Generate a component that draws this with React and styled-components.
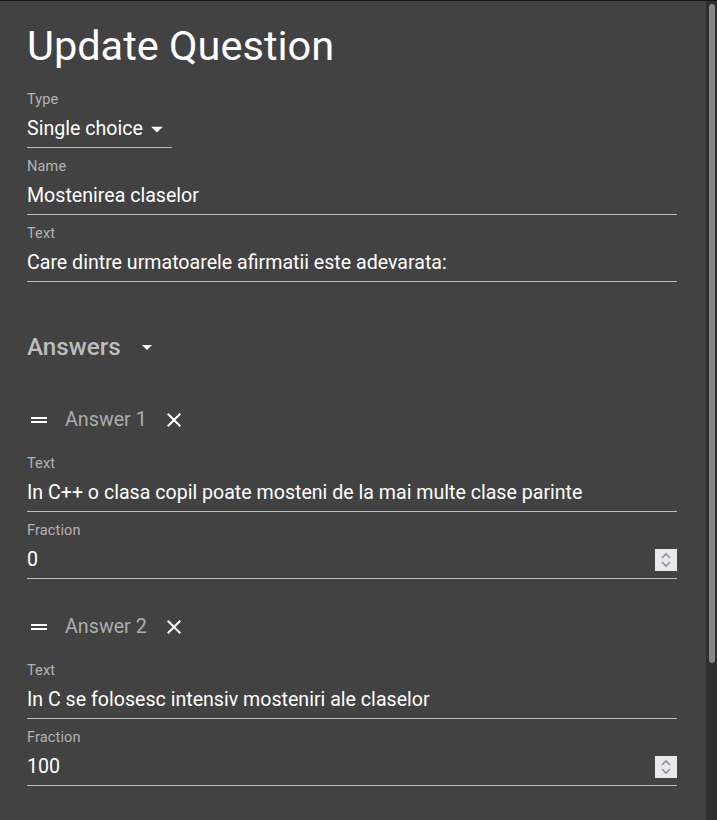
import styled, { createGlobalStyle } from 'styled-components';

const GlobalStyle = createGlobalStyle`
    html, body {
        margin: 0;
        padding: 0;
        background: #141414;
        overflow: hidden;
    }
    * {
        box-sizing: border-box;
    }
`;

const Paper = styled.div`
    margin-top: 1px;
    height: 819px;
    width: 717px;
    background: #424242;
    display: flex;
    overflow: hidden;
    font-family: Roboto, 'Liberation Sans', sans-serif;
    color: #fff;
`;

const Content = styled.div`
    flex: 1;
    padding: 21px 29px 0 27px;
    display: flex;
    flex-direction: column;
`;

const ScrollTrack = styled.div`
    width: 11px;
    background: #2f2f2f;
    padding: 3px 2px 0 3px;
`;

const ScrollThumb = styled.div`
    height: 659px;
    background: #878787;
    border-radius: 3px;
`;

const Title = styled.h1`
    margin: 0 0 21px;
    font-size: 41.5px;
    line-height: 48px;
    font-weight: 400;
    letter-spacing: 0;
`;

const Field = styled.div`
    display: flex;
    flex-direction: column;
    width: ${(p) => (p.$auto ? 'max-content' : '100%')};
    margin-bottom: 10px;
`;

const Label = styled.label`
    font-size: 14.5px;
    letter-spacing: 0.15px;
    line-height: 17px;
    color: #b4b4b4;
    margin-bottom: 8px;
`;

const InputRow = styled.div`
    display: flex;
    align-items: center;
    padding: 1px 0 6px;
    border-bottom: 1px solid #bdbdbd;
    font-size: 19.6px;
    line-height: 24px;
    height: 32px;
`;

const Value = styled.span`
    flex: 1;
    white-space: nowrap;
`;

const SelectIcon = styled.span`
    display: flex;
    align-items: center;
    justify-content: center;
    width: 29px;
    height: 24px;
`;

const Spinner = styled.span`
    width: 22px;
    height: 22px;
    background: #e9e9ed;
    display: flex;
    align-items: center;
    justify-content: center;
`;

const SectionHeader = styled.div`
    display: flex;
    align-items: center;
    margin-top: 41px;
    height: 28px;
`;

const SectionTitle = styled.h2`
    margin: 0;
    font-size: 24.2px;
    line-height: 28px;
    font-weight: 500;
    color: #bdbdbd;
`;

const HeaderArrow = styled.span`
    display: flex;
    margin-left: 14px;
    width: 24px;
    height: 24px;
`;

const AnswerBlock = styled.div`
    display: flex;
    flex-direction: column;
    margin-top: ${(p) => (p.$first ? '39px' : '18px')};
`;

const AnswerRow = styled.div`
    display: flex;
    align-items: center;
    height: 40px;
    margin-bottom: 15px;
`;

const IconBox = styled.span`
    display: flex;
    width: 24px;
    height: 24px;
    color: #fff;
`;

const AnswerTitle = styled.span`
    margin: 0 15px 0 14px;
    font-size: 19.7px;
    line-height: 24px;
    color: #adadad;
`;

const DragHandle = () => (
    <svg width="24" height="24" viewBox="0 0 24 24" fill="#fff">
        <path d="M20 9H4v2h16V9zM4 15h16v-2H4v2z" />
    </svg>
);

const CloseIcon = () => (
    <svg width="24" height="24" viewBox="0 0 24 24" fill="#fff">
        <path d="M19 6.41 17.59 5 12 10.59 6.41 5 5 6.41 10.59 12 5 17.59 6.41 19 12 13.41 17.59 19 19 17.59 13.41 12z" />
    </svg>
);

const ArrowDown = ({ size = 24 }) => (
    <svg width={size} height={size} viewBox="0 0 24 24" fill="#fff">
        <path d="M7 10l5 5 5-5z" />
    </svg>
);

const SpinArrows = () => (
    <svg width="12" height="16" viewBox="0 0 12 16" fill="none" stroke="#8f8f9d" strokeWidth="1.6">
        <path d="M2 6l4-4 4 4" />
        <path d="M2 10l4 4 4-4" />
    </svg>
);

const TextField = ({ label, value, number }) => (
    <Field>
        <Label>{label}</Label>
        <InputRow>
            <Value>{value}</Value>
            {number && (
                <Spinner>
                    <SpinArrows />
                </Spinner>
            )}
        </InputRow>
    </Field>
);

const answers = [
    { title: 'Answer 1', text: 'In C++ o clasa copil poate mosteni de la mai multe clase parinte', fraction: '0' },
    { title: 'Answer 2', text: 'In C se folosesc intensiv mosteniri ale claselor', fraction: '100' },
];

const App = () => {
    return (
        <>
            <GlobalStyle />
            <Paper>
                <Content>
                    <Title>Update Question</Title>
                    <Field $auto>
                        <Label>Type</Label>
                        <InputRow>
                            <Value>Single choice</Value>
                            <SelectIcon>
                                <ArrowDown size={28} />
                            </SelectIcon>
                        </InputRow>
                    </Field>
                    <TextField label="Name" value="Mostenirea claselor" />
                    <TextField label="Text" value="Care dintre urmatoarele afirmatii este adevarata:" />

                    <SectionHeader>
                        <SectionTitle>Answers</SectionTitle>
                        <HeaderArrow>
                            <ArrowDown />
                        </HeaderArrow>
                    </SectionHeader>

                    {answers.map((a, i) => (
                        <AnswerBlock key={a.title} $first={i === 0}>
                            <AnswerRow>
                                <IconBox>
                                    <DragHandle />
                                </IconBox>
                                <AnswerTitle>{a.title}</AnswerTitle>
                                <IconBox>
                                    <CloseIcon />
                                </IconBox>
                            </AnswerRow>
                            <TextField label="Text" value={a.text} />
                            <TextField label="Fraction" value={a.fraction} number />
                        </AnswerBlock>
                    ))}
                </Content>
                <ScrollTrack>
                    <ScrollThumb />
                </ScrollTrack>
            </Paper>
        </>
    );
};

export default App;
